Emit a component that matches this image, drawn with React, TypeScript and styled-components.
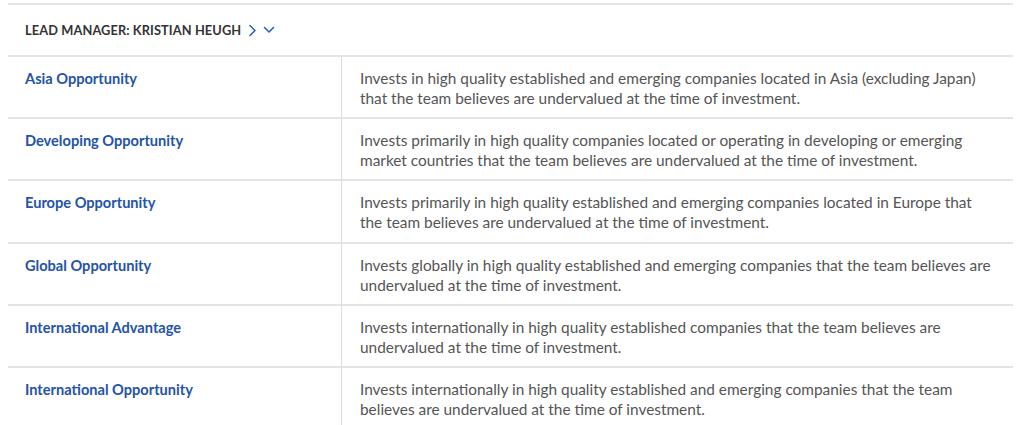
import React from "react";
import styled, { createGlobalStyle } from "styled-components";

const Global = createGlobalStyle`
  html, body { margin: 0; padding: 0; background: #fff; }
  body { font-family: Lato, "Noto Sans", sans-serif; -webkit-font-smoothing: antialiased; }
`;

const Wrapper = styled.div`
  padding: 3px 11px 0 8px;
`;

const Panel = styled.section`
  border-top: 2px solid #e4e4e4;
`;

const Header = styled.div`
  display: flex;
  align-items: center;
  padding: 1px 17px 1px;
  border-bottom: 2px solid #e4e4e4;
  gap: 7px;
  box-sizing: border-box;
  height: 52px;
`;

const HeaderTitle = styled.span`
  font-size: 12.8px;
  font-weight: 700;
  color: #333;
  letter-spacing: 0.1px;
`;

const Icons = styled.span`
  display: inline-flex;
  align-items: center;
  gap: 6px;
  color: #2a63b8;
`;

const Table = styled.div`
  display: grid;
  grid-template-columns: 334px 1fr;
`;

const Row = styled.div`
  display: contents;
`;

const Cell = styled.div<{ $last?: boolean; $name?: boolean }>`
  box-sizing: border-box;
  min-height: 62.2px;
  padding: 11px 17px 9px ${(p) => (p.$name ? "17px" : "18px")};
  border-bottom: ${(p) => (p.$last ? "none" : "2px solid #e4e4e4")};
  border-right: ${(p) => (p.$name ? "1px solid #dcdcdc" : "none")};
  line-height: 20px;
`;

const Name = styled.a`
  font-size: 14.6px;
  font-weight: 700;
  color: #2453a8;
  text-decoration: none;
`;

const Desc = styled.p`
  margin: 0;
  font-size: 15.4px;
  color: #555;
  max-width: 632px;
`;

const funds = [
  ["Asia Opportunity", "Invests in high quality established and emerging companies located in Asia (excluding Japan) that the team believes are undervalued at the time of investment."],
  ["Developing Opportunity", "Invests primarily in high quality companies located or operating in developing or emerging market countries that the team believes are undervalued at the time of investment."],
  ["Europe Opportunity", "Invests primarily in high quality established and emerging companies located in Europe that the team believes are undervalued at the time of investment."],
  ["Global Opportunity", "Invests globally in high quality established and emerging companies that the team believes are undervalued at the time of investment."],
  ["International Advantage", "Invests internationally in high quality established companies that the team believes are undervalued at the time of investment."],
  ["International Opportunity", "Invests internationally in high quality established and emerging companies that the team believes are undervalued at the time of investment."],
];

export default function App() {
  return (
    <Wrapper>
      <Global />
      <Panel>
        <Header>
          <HeaderTitle>LEAD MANAGER: KRISTIAN HEUGH</HeaderTitle>
          <Icons>
            <svg width="9" height="13" viewBox="0 0 9 13" fill="none" stroke="currentColor" strokeWidth="1.6" strokeLinecap="round" strokeLinejoin="round">
              <path d="M2 1.5 L7 6.5 L2 11.5" />
            </svg>
            <svg width="12" height="8" viewBox="0 0 12 8" fill="none" stroke="currentColor" strokeWidth="1.6" strokeLinecap="round" strokeLinejoin="round">
              <path d="M1.5 1.5 L6 6 L10.5 1.5" />
            </svg>
          </Icons>
        </Header>
        <Table>
          {funds.map(([n, d], i) => (
            <Row key={n}>
              <Cell $name $last={i === funds.length - 1}>
                <Name href="#">{n}</Name>
              </Cell>
              <Cell $last={i === funds.length - 1}>
                <Desc>{d}</Desc>
              </Cell>
            </Row>
          ))}
        </Table>
      </Panel>
    </Wrapper>
  );
}
